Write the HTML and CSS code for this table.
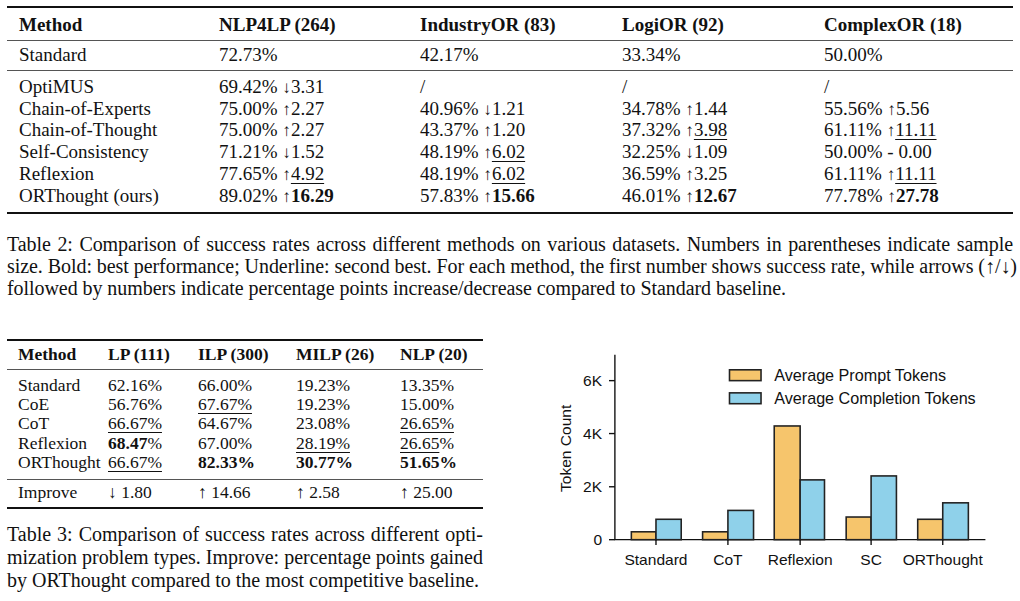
FILE: index.html
```html
<!DOCTYPE html>
<html lang="en">
<head>
  <meta charset="UTF-8">
  <title>ORThought - Results</title>
  <link rel="stylesheet" href="styles.css">
</head>
<body>

<div class="page">

  <table class="results wide">
    <colgroup>
      <col style="width:200px"><col style="width:201px"><col style="width:202px"><col style="width:202px"><col style="width:201px">
    </colgroup>
    <thead>
      <tr><th>Method</th><th>NLP4LP (264)</th><th>IndustryOR (83)</th><th>LogiOR (92)</th><th>ComplexOR (18)</th></tr>
    </thead>
    <tbody class="base">
      <tr><td>Standard</td><td>72.73%</td><td>42.17%</td><td>33.34%</td><td>50.00%</td></tr>
    </tbody>
    <tbody class="methods">
      <tr><td>OptiMUS</td><td>69.42% <span class="arr">↓</span>3.31</td><td>/</td><td>/</td><td>/</td></tr>
      <tr><td>Chain-of-Experts</td><td>75.00% <span class="arr">↑</span>2.27</td><td>40.96% <span class="arr">↓</span>1.21</td><td>34.78% <span class="arr">↑</span>1.44</td><td>55.56% <span class="arr">↑</span>5.56</td></tr>
      <tr><td>Chain-of-Thought</td><td>75.00% <span class="arr">↑</span>2.27</td><td>43.37% <span class="arr">↑</span>1.20</td><td>37.32% <span class="arr">↑</span><u>3.98</u></td><td>61.11% <span class="arr">↑</span><u>11.11</u></td></tr>
      <tr><td>Self-Consistency</td><td>71.21% <span class="arr">↓</span>1.52</td><td>48.19% <span class="arr">↑</span><u>6.02</u></td><td>32.25% <span class="arr">↓</span>1.09</td><td>50.00% - 0.00</td></tr>
      <tr><td>Reflexion</td><td>77.65% <span class="arr">↑</span><u>4.92</u></td><td>48.19% <span class="arr">↑</span><u>6.02</u></td><td>36.59% <span class="arr">↑</span>3.25</td><td>61.11% <span class="arr">↑</span><u>11.11</u></td></tr>
      <tr><td>ORThought (ours)</td><td>89.02% <span class="arr">↑</span><b>16.29</b></td><td>57.83% <span class="arr">↑</span><b>15.66</b></td><td>46.01% <span class="arr">↑</span><b>12.67</b></td><td>77.78% <span class="arr">↑</span><b>27.78</b></td></tr>
    </tbody>
  </table>

  <p class="caption cap-wide">
    <span class="ln">Table 2: Comparison of success rates across different methods on various datasets. Numbers in parentheses indicate sample</span>
    <span class="ln">size. Bold: best performance; Underline: second best. For each method, the first number shows success rate, while arrows (↑/↓)</span>
    <span class="ln last">followed by numbers indicate percentage points increase/decrease compared to Standard baseline.</span>
  </p>

  <div class="lower">
    <div class="left">
      <table class="results small">
        <colgroup>
          <col style="width:90px"><col style="width:90px"><col style="width:98px"><col style="width:104px"><col style="width:94px">
        </colgroup>
        <thead>
          <tr><th>Method</th><th>LP (111)</th><th>ILP (300)</th><th>MILP (26)</th><th>NLP (20)</th></tr>
        </thead>
        <tbody class="types">
          <tr><td>Standard</td><td>62.16%</td><td>66.00%</td><td>19.23%</td><td>13.35%</td></tr>
          <tr><td>CoE</td><td>56.76%</td><td><u>67.67%</u></td><td>19.23%</td><td>15.00%</td></tr>
          <tr><td>CoT</td><td><u>66.67%</u></td><td>64.67%</td><td>23.08%</td><td><u>26.65%</u></td></tr>
          <tr><td>Reflexion</td><td><b>68.47</b>%</td><td>67.00%</td><td><u>28.19%</u></td><td><u>26.65</u>%</td></tr>
          <tr><td>ORThought</td><td><u>66.67%</u></td><td><b>82.33%</b></td><td><b>30.77%</b></td><td><b>51.65%</b></td></tr>
        </tbody>
        <tbody class="improve">
          <tr><td>Improve</td><td><span class="arr">↓</span> 1.80</td><td><span class="arr">↑</span> 14.66</td><td><span class="arr">↑</span> 2.58</td><td><span class="arr">↑</span> 25.00</td></tr>
        </tbody>
      </table>

      <p class="caption cap-small">
        <span class="ln">Table 3: Comparison of success rates across different opti-</span>
        <span class="ln">mization problem types. Improve: percentage points gained</span>
        <span class="ln last">by ORThought compared to the most competitive baseline.</span>
      </p>
    </div>

    <svg class="chart" width="480" height="262" viewBox="0 0 480 262">
      <!-- axes -->
      <line class="axis" x1="76" y1="13" x2="76" y2="201"/>
      <line class="axis" x1="75.4" y1="200.7" x2="452" y2="200.7"/>
      <line class="axis" x1="70" y1="200.7" x2="76" y2="200.7"/>
      <line class="axis" x1="70" y1="147" x2="76" y2="147"/>
      <line class="axis" x1="70" y1="93" x2="76" y2="93"/>
      <line class="axis" x1="70" y1="39.3" x2="76" y2="39.3"/>
      <text class="tick" x="63" y="206">0</text>
      <text class="tick" x="63" y="152.3">2K</text>
      <text class="tick" x="63" y="98.5">4K</text>
      <text class="tick" x="63" y="44.8">6K</text>
      <text class="ylabel" transform="translate(31 108) rotate(-90)">Token Count</text>

      <!-- bars: prompt / completion -->
      <rect class="prompt" x="92.7" y="192.7" width="25" height="8"/>
      <rect class="completion" x="117.7" y="180" width="25.6" height="20.7"/>
      <rect class="prompt" x="165" y="192.7" width="25.7" height="8"/>
      <rect class="completion" x="190.7" y="171" width="26" height="29.7"/>
      <rect class="prompt" x="237.7" y="85.3" width="26.3" height="115.4"/>
      <rect class="completion" x="264" y="140" width="24.7" height="60.7"/>
      <rect class="prompt" x="310.7" y="177.7" width="25.3" height="23"/>
      <rect class="completion" x="336" y="136" width="25.7" height="64.7"/>
      <rect class="prompt" x="383.3" y="180" width="25.4" height="20.7"/>
      <rect class="completion" x="408.7" y="163.3" width="26" height="37.4"/>

      <line class="axis" x1="117.7" y1="200.7" x2="117.7" y2="206"/>
      <line class="axis" x1="190.7" y1="200.7" x2="190.7" y2="206"/>
      <line class="axis" x1="264" y1="200.7" x2="264" y2="206"/>
      <line class="axis" x1="336" y1="200.7" x2="336" y2="206"/>
      <line class="axis" x1="408.7" y1="200.7" x2="408.7" y2="206"/>

      <text class="xlab" x="117.7" y="226.5">Standard</text>
      <text class="xlab" x="190.7" y="226.5">CoT</text>
      <text class="xlab" x="264" y="226.5">Reflexion</text>
      <text class="xlab" x="336" y="226.5">SC</text>
      <text class="xlab" x="408.7" y="226.5">ORThought</text>

      <!-- legend -->
      <rect class="prompt" x="192.3" y="28.3" width="32" height="11"/>
      <rect class="completion" x="192.3" y="51.7" width="32" height="11"/>
      <text class="legend" x="237.7" y="39.8">Average Prompt Tokens</text>
      <text class="legend" x="237.7" y="62.8">Average Completion Tokens</text>
    </svg>
  </div>

</div>

</body>
</html>
```

FILE: styles.css
```css
body {
  margin: 0;
  background: #fff;
  color: #111;
  font-family: "Liberation Serif", "Times New Roman", serif;
}

.page {
  padding: 6px 7px 0;
}

/* Tables */
.results {
  border-collapse: collapse;
  table-layout: fixed;
  border-top: 2px solid #111;
  border-bottom: 2px solid #111;
}

.results th {
  text-align: left;
  font-weight: bold;
}

.results th,
.results td {
  padding: 0 0 0 12px;
  white-space: nowrap;
}

.results u {
  text-decoration: underline;
  text-decoration-thickness: 1px;
  text-underline-offset: 3px;
}

.arr {
  font-size: 0.9em;
  line-height: 1;
}

.wide {
  width: 1006px;
  font-size: 19px;
  line-height: 22px;
}

.wide thead {
  border-bottom: 1px solid #555;
}

.wide th {
  padding-top: 6px;
  padding-bottom: 4px;
}

.wide .base {
  border-bottom: 1px solid #555;
}

.wide .base td {
  padding-top: 3px;
  padding-bottom: 4px;
}

.wide .methods td {
  line-height: 21.7px;
}

.wide .methods tr:first-child td {
  padding-top: 5px;
}

.wide .methods tr:last-child td {
  padding-bottom: 6px;
}

/* Captions */
.caption {
  margin: 0;
  font-size: 20px;
  letter-spacing: -0.06px;
  line-height: 22px;
}

.caption .ln {
  display: block;
  white-space: nowrap;
  text-align: justify;
  text-align-last: justify;
}

.caption .ln.last {
  text-align-last: left;
}

.cap-wide {
  width: 1006px;
  margin-top: 19px;
}

/* Lower half */
.lower {
  display: flex;
  align-items: flex-start;
  margin-top: 40px;
}

.left {
  width: 476px;
}

.small {
  width: 476px;
  font-size: 17.5px;
  line-height: 19.4px;
}

.small th,
.small td {
  padding-left: 11px;
}

.small .arr {
  font-size: 1em;
}

.small thead {
  border-bottom: 1px solid #555;
}

.small th {
  padding-top: 4px;
  padding-bottom: 4px;
}

.small .types {
  border-bottom: 1px solid #555;
}

.small .types tr:first-child td {
  padding-top: 6px;
}

.small .types tr:last-child td {
  padding-bottom: 6px;
}

.small .improve td {
  padding-top: 3px;
  padding-bottom: 5px;
}

.cap-small {
  width: 476px;
  margin-top: 14px;
  letter-spacing: 0;
  line-height: 22.8px;
}

/* Chart */
.chart {
  margin-top: 1px;
  margin-left: 57px;
  font-family: "Liberation Sans", Arial, sans-serif;
}

.chart .axis {
  stroke: #111;
  stroke-width: 1.4;
}

.chart .prompt,
.chart .completion {
  stroke: #222;
  stroke-width: 1.6;
}

.chart .prompt {
  fill: #f6c56c;
}

.chart .completion {
  fill: #8fd1ea;
}

.chart text {
  fill: #111;
  font-size: 15.8px;
}

.chart .legend {
  font-size: 16.4px;
}

.chart .tick {
  text-anchor: end;
}

.chart .xlab {
  text-anchor: middle;
}

.chart .ylabel {
  text-anchor: middle;
}
```
